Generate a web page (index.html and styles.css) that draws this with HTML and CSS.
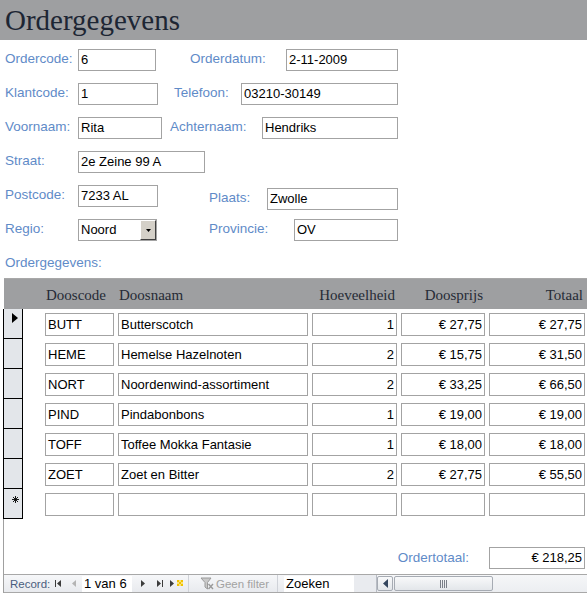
FILE: index.html
```html
<!DOCTYPE html>
<html>
<head>
<meta charset="utf-8">
<link rel="stylesheet" href="styles.css">
</head>
<body>
<div class="title">Ordergegevens</div>
<div class="form">
  <div class="row">
    <span class="lbl w73">Ordercode:</span><span class="box b-ordercode">6</span>
    <span class="lbl l-datum">Orderdatum:</span><span class="box b-datum">2-11-2009</span>
  </div>
  <div class="row">
    <span class="lbl w73">Klantcode:</span><span class="box b-klant">1</span>
    <span class="lbl l-tel">Telefoon:</span><span class="box b-tel">03210-30149</span>
  </div>
  <div class="row">
    <span class="lbl w73">Voornaam:</span><span class="box b-voor">Rita</span>
    <span class="lbl l-achter">Achternaam:</span><span class="box b-achter">Hendriks</span>
  </div>
  <div class="row">
    <span class="lbl w73">Straat:</span><span class="box b-straat">2e Zeine 99 A</span>
  </div>
  <div class="row">
    <span class="lbl w73">Postcode:</span><span class="box b-post">7233 AL</span>
    <span class="lbl l-plaats">Plaats:</span><span class="box b-plaats">Zwolle</span>
  </div>
  <div class="row">
    <span class="lbl w73">Regio:</span>
    <span class="box combo"><span class="combo-text">Noord</span><span class="combo-btn"><svg width="5" height="3" viewBox="0 0 5 3"><path d="M0 0H5L2.5 3Z" fill="#000"/></svg></span></span>
    <span class="lbl l-prov">Provincie:</span><span class="box b-prov">OV</span>
  </div>
  <div class="lbl sublabel">Ordergegevens:</div>
</div>

<div class="sub">
  <div class="sub-head">
    <div class="cells hcells">
      <div class="hc c1">Dooscode</div>
      <div class="hc c2">Doosnaam</div>
      <div class="hc c3 r">Hoeveelheid</div>
      <div class="hc c4 r">Doosprijs</div>
      <div class="hc c5 r">Totaal</div>
    </div>
  </div>
  <div class="sub-body">
    <div class="rec">
      <div class="sel"><svg class="cur" width="6" height="10" viewBox="0 0 6 10"><path d="M0 0L6 5L0 10Z" fill="#000"/></svg></div>
      <div class="cells">
        <div class="fb c1">BUTT</div><div class="fb c2">Butterscotch</div><div class="fb c3 r">1</div><div class="fb c4 r">€ 27,75</div><div class="fb c5 r">€ 27,75</div>
      </div>
    </div>
    <div class="rec">
      <div class="sel"></div>
      <div class="cells">
        <div class="fb c1">HEME</div><div class="fb c2">Hemelse Hazelnoten</div><div class="fb c3 r">2</div><div class="fb c4 r">€ 15,75</div><div class="fb c5 r">€ 31,50</div>
      </div>
    </div>
    <div class="rec">
      <div class="sel"></div>
      <div class="cells">
        <div class="fb c1">NORT</div><div class="fb c2">Noordenwind-assortiment</div><div class="fb c3 r">2</div><div class="fb c4 r">€ 33,25</div><div class="fb c5 r">€ 66,50</div>
      </div>
    </div>
    <div class="rec">
      <div class="sel"></div>
      <div class="cells">
        <div class="fb c1">PIND</div><div class="fb c2">Pindabonbons</div><div class="fb c3 r">1</div><div class="fb c4 r">€ 19,00</div><div class="fb c5 r">€ 19,00</div>
      </div>
    </div>
    <div class="rec">
      <div class="sel"></div>
      <div class="cells">
        <div class="fb c1">TOFF</div><div class="fb c2">Toffee Mokka Fantasie</div><div class="fb c3 r">1</div><div class="fb c4 r">€ 18,00</div><div class="fb c5 r">€ 18,00</div>
      </div>
    </div>
    <div class="rec">
      <div class="sel"></div>
      <div class="cells">
        <div class="fb c1">ZOET</div><div class="fb c2">Zoet en Bitter</div><div class="fb c3 r">2</div><div class="fb c4 r">€ 27,75</div><div class="fb c5 r">€ 55,50</div>
      </div>
    </div>
    <div class="rec">
      <div class="sel"><svg class="star" width="7" height="7" viewBox="0 0 7 7"><path d="M3.5 0V7M0 3.5H7M1 1L6 6M6 1L1 6" stroke="#000" stroke-width="0.9" fill="none"/></svg></div>
      <div class="cells">
        <div class="fb c1"></div><div class="fb c2"></div><div class="fb c3"></div><div class="fb c4"></div><div class="fb c5"></div>
      </div>
    </div>

    <div class="total">
      <span class="lbl l-total">Ordertotaal:</span><span class="box b-total">€ 218,25</span>
    </div>

    <div class="nav">
      <span class="nav-rec">Record:</span>
      <svg class="n-first" width="6" height="7" viewBox="0 0 6 7"><path d="M0 0H1V7H0Z M6 0V7L2 3.5Z" fill="#3c3c3c"/></svg>
      <svg class="n-prev" width="4" height="7" viewBox="0 0 4 7"><path d="M4 0V7L0 3.5Z" fill="#b4b4b4"/></svg>
      <span class="nav-box">1 van 6</span>
      <svg class="n-next" width="4" height="7" viewBox="0 0 4 7"><path d="M0 0V7L4 3.5Z" fill="#3c3c3c"/></svg>
      <svg class="n-last" width="6" height="7" viewBox="0 0 6 7"><path d="M0 0V7L4 3.5Z M5 0H6V7H5Z" fill="#3c3c3c"/></svg>
      <svg class="n-new" width="13" height="7" viewBox="0 0 13 7"><path d="M0 0V7L4 3.5Z" fill="#3c3c3c"/><path d="M7 0h2v2h-2z M11 0h2v2h-2z M9 2h2v2h-2z M7 4h2v2h-2z M11 4h2v2h-2z" fill="#f2c200"/><path d="M9 0h2v2h-2z M7 2h2v2h-2z M11 2h2v2h-2z M9 4h2v2h-2z" fill="#f8e27a"/></svg>
      <span class="nav-sep s1"></span>
      <svg class="n-filter" width="15" height="13" viewBox="0 0 15 13"><path d="M2 1H12L8.5 5.5V12L6 10V5.5Z" fill="#c9c9c9" stroke="#9a9a9a" stroke-width="1"/><path d="M9.5 7L14 12M14 7L9.5 12" stroke="#9a9a9a" stroke-width="1.4"/></svg>
      <span class="nav-filter">Geen filter</span>
      <span class="nav-sep s2"></span>
      <span class="nav-box zoek">Zoeken</span>
      <span class="nav-gap"></span>
      <span class="scroll-btn"><svg width="5" height="9" viewBox="0 0 5 9"><path d="M5 0V9L0 4.5Z" fill="#34465e"/></svg></span>
      <span class="scroll-thumb"><svg width="8" height="8" viewBox="0 0 8 8"><path d="M0.5 0V8M2.5 0V8M4.5 0V8M6.5 0V8" stroke="#7a7f88" stroke-width="1"/></svg></span>
      <span class="scroll-track"></span>
    </div>
  </div>
</div>
</body>
</html>
```

FILE: styles.css
```css
* { box-sizing: border-box; }

body {
  margin: 0;
  width: 587px;
  height: 595px;
  overflow: hidden;
  background: #ffffff;
  font-family: "Liberation Sans", Arial, sans-serif;
}

.title {
  height: 40px;
  background: #9e9fa1;
  color: #1d2634;
  font-family: "Liberation Serif", "Times New Roman", serif;
  font-size: 29px;
  line-height: 40px;
  padding-left: 5px;
}

.form {
  padding: 9px 0 0 5px;
}

.row {
  display: flex;
  align-items: flex-start;
  height: 34px;
}

.lbl {
  flex: none;
  font-size: 13.5px;
  line-height: 20px;
  color: #5f8bc8;
  white-space: nowrap;
}

.box {
  flex: none;
  height: 22px;
  border: 1px solid #a3a3a3;
  font-size: 13px;
  line-height: 20px;
  padding-left: 2px;
  color: #000;
  white-space: nowrap;
  overflow: hidden;
}

.w73 { width: 73px; }

.b-ordercode { width: 78px; }
.l-datum { margin-left: 34px; width: 96px; }
.b-datum { width: 112px; }

.b-klant { width: 80px; }
.l-tel { margin-left: 16px; width: 67px; }
.b-tel { width: 157px; }

.b-voor { width: 84px; }
.l-achter { margin-left: 8px; width: 92px; }
.b-achter { width: 136px; }

.b-straat { width: 127px; }

.b-post { width: 80px; }
.l-plaats { margin-left: 51px; width: 58px; margin-top: 3px; }
.b-plaats { width: 131px; margin-top: 3px; }

.combo {
  width: 79px;
  display: flex;
  padding-left: 2px;
}
.combo-text { flex: 1; }
.combo-btn {
  flex: none;
  width: 16px;
  height: 20px;
  background: #d4d0c8;
  border-top: 1px solid #ffffff;
  border-left: 1px solid #ffffff;
  border-right: 1px solid #404040;
  border-bottom: 1px solid #404040;
  display: flex;
  align-items: center;
  justify-content: center;
}
.l-prov { margin-left: 52px; width: 85px; }
.b-prov { width: 104px; }

.sublabel {
  margin-bottom: 5px;
}

/* subform */
.sub {
  margin-left: 3px;
}

.sub-head {
  margin-left: 1px;
  height: 31px;
  border-top: 1px solid #a8a8a8;
  background: #9e9fa1;
}

.cells {
  display: flex;
  gap: 4px;
  margin-left: 22px;
  padding-top: 4px;
}

.hcells {
  margin-left: 41px;
  padding-top: 0;
}

.c1 { width: 69px; }
.c2 { width: 190px; }
.c3 { width: 85px; }
.c4 { width: 84px; }
.c5 { width: 96px; }

.hc {
  flex: none;
  font-family: "Liberation Serif", "Times New Roman", serif;
  font-size: 15px;
  color: #262b36;
  height: 30px;
  line-height: 28px;
  padding: 2px 2px 0 1px;
  white-space: nowrap;
}

.r { text-align: right; }

.sub-body {
  border-left: 1px solid #a0a0a0;
}

.rec {
  display: flex;
  height: 30px;
}

.sel {
  flex: none;
  width: 20px;
  height: 30px;
  margin-left: -1px;
  background: #e3e6ea;
  border: 1px solid #000;
  border-top: none;
  padding: 4px 0 0 8px;
}

.sel .star {
  display: block;
  margin: 3px 0 0 0;
}

.sel .cur { display: block; }

.fb {
  flex: none;
  height: 23px;
  border: 1px solid #a3a3a3;
  font-size: 13px;
  line-height: 21px;
  padding: 0 2px;
  color: #000;
  white-space: nowrap;
  overflow: hidden;
}

.total {
  display: flex;
  justify-content: flex-end;
  align-items: center;
  margin-top: 28px;
  padding-right: 2px;
  height: 22px;
}

.l-total { margin-right: 20px; }
.b-total {
  width: 96px;
  text-align: right;
  padding-right: 2px;
}

/* navigation bar */
.nav {
  margin-top: 5px;
  height: 19px;
  border-top: 1px solid #a8a8a8;
  border-bottom: 1px solid #a8a8a8;
  background: linear-gradient(#f6f7f9, #e8eaee);
  display: flex;
  align-items: center;
  padding-left: 6px;
}

.nav > * { flex: none; }

.nav-rec {
  width: 45px;
  font-size: 11.5px;
  color: #4a5d7e;
}

.n-prev { margin-left: 11px; }

.nav-box {
  margin-left: 6px;
  width: 50px;
  height: 16px;
  background: #ffffff;
  font-size: 13px;
  line-height: 16px;
  padding-left: 2px;
  color: #000;
}

.n-next { margin-left: 9px; }
.n-last { margin-left: 12px; }
.n-new { margin-left: 7px; }

.nav-sep {
  width: 1px;
  height: 17px;
  background: #cfd2d8;
}
.s1 { margin-left: 5px; }
.n-filter { margin-left: 10px; }

.nav-filter {
  margin-left: 2px;
  width: 54px;
  font-size: 11.5px;
  color: #a2a2a2;
  white-space: nowrap;
}
.s2 { margin-left: 7px; }

.zoek {
  margin-left: 6px;
  width: 70px;
}

.nav-gap {
  width: 23px;
  height: 17px;
  background: #e9ebef;
  border-right: 1px solid #b8bcc4;
}

.scroll-btn {
  width: 16px;
  height: 15px;
  border: 1px solid #a6abb3;
  border-radius: 2px;
  background: linear-gradient(#f8f9fa, #e3e6ea);
  display: flex;
  align-items: center;
  justify-content: center;
}

.scroll-thumb {
  margin-left: 1px;
  width: 99px;
  height: 15px;
  border: 1px solid #a6abb3;
  border-radius: 2px;
  background: linear-gradient(#f8f9fa, #e3e6ea);
  display: flex;
  align-items: center;
  justify-content: center;
}

.scroll-track {
  flex: 1;
  height: 17px;
  background: linear-gradient(#f5f6f8, #eceef1);
}
```
